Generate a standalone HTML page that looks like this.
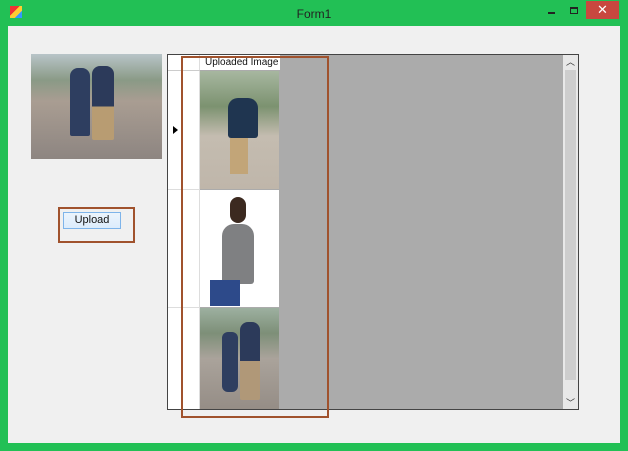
<!DOCTYPE html>
<html><head><style>
*{margin:0;padding:0;box-sizing:border-box}
body{width:628px;height:451px;background:#22c055;position:relative;overflow:hidden;font-family:"Liberation Sans",sans-serif}
.a{position:absolute}
</style></head><body>
<div class="a" style="left:10px;top:6px;width:12px;height:12px;background:linear-gradient(135deg,#e33 0 40%,#fc3 40% 70%,#39f 70%)"></div>
<div class="a" style="left:0;top:7px;width:628px;text-align:center;font-size:12px;color:#222">Form1</div>
<div class="a" style="left:548px;top:12px;width:7px;height:2px;background:#222"></div>
<div class="a" style="left:570px;top:7px;width:8px;height:7px;border:1px solid #222;border-top-width:2px"></div>
<div class="a" style="left:586px;top:1px;width:33px;height:18px;background:#c9483f;color:#fff;font-size:13px;text-align:center;line-height:18px">✕</div>
<div class="a" style="left:8px;top:26px;width:612px;height:417px;background:#f0f0f0"></div>
<!-- left photo -->
<div class="a" style="left:31px;top:54px;width:131px;height:105px;background:linear-gradient(180deg,#b8c4c8 0,#8a9a86 25%,#a99d92 45%,#8d8581 100%)"></div>
<div class="a" style="left:70px;top:68px;width:20px;height:68px;background:#2e3e60;border-radius:8px 8px 2px 2px"></div>
<div class="a" style="left:92px;top:66px;width:22px;height:74px;background:linear-gradient(#2c3a5a 0 55%,#b89c72 55%);border-radius:8px 8px 2px 2px"></div>
<!-- upload -->
<div class="a" style="left:58px;top:207px;width:77px;height:36px;border:2px solid #a0522d"></div>
<div class="a" style="left:63px;top:212px;width:58px;height:17px;border:1px solid #7eb4ea;background:linear-gradient(#ecf4fc,#dcecfc);font-size:11px;text-align:center;line-height:15px;color:#111">Upload</div>
<!-- grid -->
<div class="a" style="left:167px;top:54px;width:412px;height:356px;border:1px solid #444;background:#ababab"></div>
<div class="a" style="left:168px;top:55px;width:32px;height:354px;background:#fff;border-right:1px solid #ddd"></div>
<div class="a" style="left:168px;top:70px;width:32px;height:1px;background:#ccc"></div>
<div class="a" style="left:168px;top:189px;width:32px;height:1px;background:#ddd"></div>
<div class="a" style="left:168px;top:307px;width:32px;height:1px;background:#ddd"></div>
<div class="a" style="left:173px;top:126px;width:0;height:0;border-left:5px solid #000;border-top:4px solid transparent;border-bottom:4px solid transparent"></div>
<div class="a" style="left:200px;top:55px;width:80px;height:15px;background:#fff;font-size:10px;line-height:15px;padding-left:5px;color:#111">Uploaded Image</div>
<div class="a" style="left:200px;top:71px;width:79px;height:118px;background:linear-gradient(180deg,#a7b7a0 0,#7c9270 30%,#c4bcb0 55%,#bfb6aa 100%)"></div>
<div class="a" style="left:228px;top:98px;width:30px;height:40px;background:#1f3550;border-radius:10px 10px 3px 3px"></div>
<div class="a" style="left:230px;top:138px;width:18px;height:36px;background:#c2a578"></div>
<div class="a" style="left:200px;top:190px;width:79px;height:117px;background:#fff"></div>
<div class="a" style="left:222px;top:224px;width:32px;height:60px;background:#7f8082;border-radius:12px 12px 3px 3px"></div>
<div class="a" style="left:230px;top:197px;width:16px;height:26px;background:#3c2a20;border-radius:8px"></div>
<div class="a" style="left:210px;top:280px;width:30px;height:26px;background:#2d4a8a"></div>
<div class="a" style="left:200px;top:308px;width:79px;height:101px;background:linear-gradient(180deg,#9db0a0 0,#7d8f78 25%,#aaa39b 50%,#958d86 100%)"></div>
<div class="a" style="left:222px;top:332px;width:16px;height:60px;background:#2e3e60;border-radius:6px"></div>
<div class="a" style="left:240px;top:322px;width:20px;height:78px;background:linear-gradient(#2c3a5a 0 50%,#b09878 50%);border-radius:8px 8px 2px 2px"></div>
<!-- scrollbar -->
<div class="a" style="left:563px;top:55px;width:15px;height:354px;background:#e8e8e8"></div>
<div class="a" style="left:565px;top:70px;width:11px;height:310px;background:#cdcdcd"></div>
<div class="a" style="left:563px;top:55px;width:15px;height:14px;font-size:9px;text-align:center;color:#333">︿</div>
<div class="a" style="left:563px;top:396px;width:15px;height:14px;font-size:9px;text-align:center;color:#333">﹀</div>
<!-- red highlight -->
<div class="a" style="left:181px;top:56px;width:148px;height:362px;border:2px solid #a0522d"></div>
</body></html>
